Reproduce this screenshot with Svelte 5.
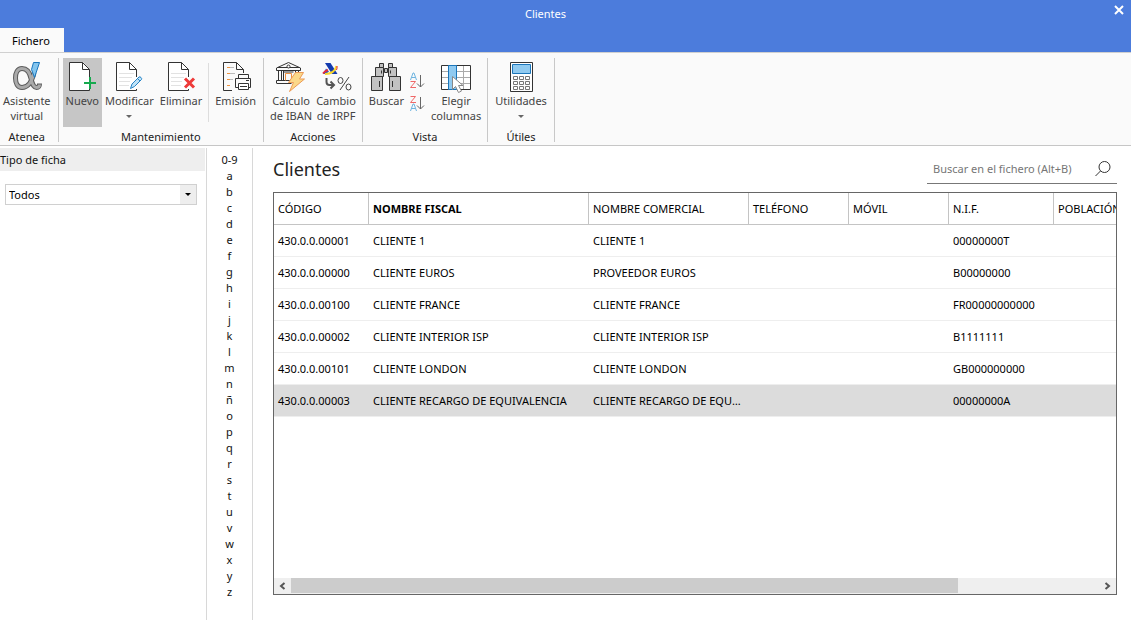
<script lang="ts">
  type Row = {
    codigo: string;
    fiscal: string;
    comercial: string;
    telefono: string;
    movil: string;
    nif: string;
    poblacion: string;
  };

  const columns: { key: keyof Row; label: string }[] = [
    { key: "codigo", label: "CÓDIGO" },
    { key: "fiscal", label: "NOMBRE FISCAL" },
    { key: "comercial", label: "NOMBRE COMERCIAL" },
    { key: "telefono", label: "TELÉFONO" },
    { key: "movil", label: "MÓVIL" },
    { key: "nif", label: "N.I.F." },
    { key: "poblacion", label: "POBLACIÓN" },
  ];

  function row(codigo: string, fiscal: string, comercial: string, nif: string): Row {
    return { codigo, fiscal, comercial, nif, telefono: "", movil: "", poblacion: "" };
  }

  const rows: Row[] = [
    row("430.0.0.00001", "CLIENTE 1", "CLIENTE 1", "00000000T"),
    row("430.0.0.00000", "CLIENTE EUROS", "PROVEEDOR EUROS", "B00000000"),
    row("430.0.0.00100", "CLIENTE FRANCE", "CLIENTE FRANCE", "FR00000000000"),
    row("430.0.0.00002", "CLIENTE INTERIOR ISP", "CLIENTE INTERIOR ISP", "B1111111"),
    row("430.0.0.00101", "CLIENTE LONDON", "CLIENTE LONDON", "GB000000000"),
    row(
      "430.0.0.00003",
      "CLIENTE RECARGO DE EQUIVALENCIA",
      "CLIENTE RECARGO DE EQUIVALENCIA",
      "00000000A",
    ),
  ];

  const letters = ["0-9", ..."abcdefghijklmnñopqrstuvwxyz"];

  let selected = $state("430.0.0.00003");
  let tipo = $state("Todos");
  let search = $state("");
  let scroller: HTMLDivElement;

  function scroll(dx: number) {
    scroller.scrollLeft += dx;
  }
</script>

{#snippet page()}
  <path d="M1.5 1.5h14l6 7v21h-20z" fill="#fff" stroke="none" />
  <path d="M21.5 16V8.5l-7-7h-13v28h20v-1.5" fill="none" stroke="#333" />
  <path d="M14.5 1.5v7h7" fill="none" stroke="#333" />
{/snippet}

{#snippet lines()}
  <path d="M4 12.5h15M4 16.500h13M4 20.500h11M4 24.500h10" stroke="#e2e2e2" />
{/snippet}

<div class="window">
  <header class="titlebar">
    <h1>Clientes</h1>
    <button type="button" class="close" aria-label="Cerrar">
      <svg width="10" height="10" viewBox="0 0 10 10">
        <path d="M1 1l8 8M9 1L1 9" stroke="#fff" stroke-width="2" />
      </svg>
    </button>
  </header>
  <nav class="tabs">
    <button type="button" class="tab">Fichero</button>
  </nav>

  <div class="ribbon">
    <section class="group first">
      <div class="tools">
        <button type="button" class="tool">
          <svg width="32" height="32" viewBox="0 0 32 32" fill="none">
            <path
              d="M23 12C21 20 17 26.500 11 26.500 6.500 26.500 4.500 22 4.500 17S6.500 7.500 11 7.500c6 0 8 5 9 10s3 9 5.500 9c2 0 3-1 3-4"
              stroke="#5c5c5c"
              stroke-width="5"
            />
            <path
              d="M23 12C21 20 17 26.500 11 26.500 6.500 26.500 4.500 22 4.500 17S6.500 7.500 11 7.500c6 0 8 5 9 10s3 9 5.500 9c2 0 3-1 3-3"
              stroke="#aaa"
              stroke-width="3"
            />
            <path d="M22.500 1.500h6l-5 15-3-8z" fill="#83c5ee" stroke="#1976bd" />
          </svg>
          <span>Asistente<br />virtual</span>
        </button>
      </div>
      <h2>Atenea</h2>
    </section>

    <section class="group">
      <div class="tools">
        <button type="button" class="tool active">
          <svg width="32" height="32" viewBox="-2 0 32 32">
            {@render page()}
            <path d="M22 16v12M16 22h12" stroke="#16a94e" stroke-width="2" />
          </svg>
          <span>Nuevo</span>
        </button>
        <button type="button" class="tool">
          <svg width="32" height="32" viewBox="-2 0 32 32">
            {@render page()}
            {@render lines()}
            <path
              d="M15.500 27.500l1.500-4.500 7-7c1-1 3.500 1.500 2.500 2.500l-7 7zM22.500 17.500l2.500 2.500"
              fill="#bfe2f7"
              stroke="#2583c6"
            />
          </svg>
          <span>Modificar</span>
          <i class="caret"></i>
        </button>
        <button type="button" class="tool">
          <svg width="32" height="32" viewBox="-2 0 32 32">
            {@render page()}
            {@render lines()}
            <path d="M18 17.500l9 9M27 17.500l-9 9" stroke="#ee3a39" stroke-width="3" />
          </svg>
          <span>Eliminar</span>
        </button>
        <div class="divider"></div>
        <button type="button" class="tool">
          <svg width="32" height="32" viewBox="0 0 32 32" fill="none" stroke="#333">
            <path d="M12 29.500H3.500v-28h13l7 7V12M16.500 1.500v7h7" />
            <path d="M7 6.500h3M7 12.500h3M7 18.500h3M7 24.500h3" stroke="#ef9440" />
            <path d="M10 6.500h4M10 12.500h5M10 18.500h3" stroke="#bbb" />
            <path d="M18.500 17.500v-4h10v4M18.500 26.500h-3v-9h15v9h-3" fill="#fafafa" />
            <path d="M18.500 22.500h10v6h-10zM20 25.500h7M26 19.500h3" fill="#fff" />
          </svg>
          <span>Emisión</span>
        </button>
      </div>
      <h2>Mantenimiento</h2>
    </section>

    <section class="group tight">
      <div class="tools">
        <button type="button" class="tool">
          <svg width="32" height="32" viewBox="0 0 32 32" fill="none" stroke="#333">
            <path d="M1.500 9.500V7L13.500 1.500 25.500 7v2.500zM3 6.500h21" />
            <circle cx="13.500" cy="5.500" r="1.500" fill="#fff" />
            <path
              d="M3.500 10v9.500h3V10M8.500 10v9.500M20.500 10v5M23.500 10v3M3 19.500h7M1.500 22.500h15M1.500 22v-2.500h16M8.500 11h10"
            />
            <path d="M10.500 19.500v-7h6v5" stroke="#ed9141" />
            <path
              d="M20.500 11.500h8l-4 6.500h5l-15 12.500 4-9h-5z"
              fill="#fbd889"
              stroke="#ed9b56"
            />
          </svg>
          <span>Cálculo<br />de IBAN</span>
        </button>
        <button type="button" class="tool">
          <svg width="32" height="32" viewBox="0 0 32 32" fill="none">
            <path d="M5 2h5.500l7 11H12z" fill="#143bae" />
            <path d="M6 7.500l3 3-3 2.500H3z" fill="#2356c8" />
            <path d="M3 12.500c1.500-2 3-3 5-3.500" stroke="#e92939" stroke-width="2" />
            <path d="M5 13c5 0 10-2 11.500-8" stroke="#f9d729" stroke-width="2" />
            <path d="M16.500 9c.5-1 .8-2.500.5-4" stroke="#e92939" />
            <path
              d="M6.500 17v4c0 2 1 3 3 3h4M10.500 20.500l3.500 3.500-3.500 3.500"
              stroke="#555"
              stroke-width="2"
            />
            <path d="M29 16L20 29" stroke="#444" />
            <ellipse cx="20.500" cy="19.500" rx="2.500" ry="3" stroke="#444" />
            <ellipse cx="28.500" cy="26" rx="2.500" ry="3" stroke="#444" />
          </svg>
          <span>Cambio<br />de IRPF</span>
        </button>
      </div>
      <h2>Acciones</h2>
    </section>

    <section class="group tight">
      <div class="tools">
        <button type="button" class="tool">
          <svg width="32" height="32" viewBox="0 0 32 32" fill="#c2c2c2" stroke="#333">
            <path d="M9.500 2.500h4v4h-4zM18.500 2.500h4v4h-4zM14.500 7.500h3v4h-3z" />
            <path d="M5.500 6.500h8v9h-8zM18.500 6.500h8v9h-8z" />
            <path d="M1.500 15.500h11v14h-11zM19.500 15.500h11v14h-11z" />
            <path d="M9.500 20v6M22.500 20v6M11.500 9.500v3M20.500 9.500v3" />
          </svg>
          <span>Buscar</span>
        </button>
        <div class="sorts">
          <button type="button" aria-label="Orden ascendente">
            <svg width="18" height="18" viewBox="0 0 18 18" fill="none">
              <path d="M2.500 8l2.500-7h1l2.500 7M3.500 5.500h4" stroke="#6eb4e0" />
              <path d="M2.500 9.500h5l-5 6h5.500" stroke="#ef6868" />
              <path d="M12.500 3v12M9 11.500l3.500 3.500 3.500-3.500" stroke="#666" />
            </svg>
          </button>
          <button type="button" aria-label="Orden descendente">
            <svg width="18" height="18" viewBox="0 0 18 18" fill="none">
              <path d="M2.500 1.500h5l-5 6h5.500" stroke="#ef6868" />
              <path d="M2.500 16l2.500-7h1l2.500 7M3.500 13.500h4" stroke="#6eb4e0" />
              <path d="M12.500 2v12M9 10.500l3.500 3.500 3.500-3.500" stroke="#666" />
            </svg>
          </button>
        </div>
        <button type="button" class="tool">
          <svg width="32" height="32" viewBox="0 0 32 32" fill="none">
            <path d="M1.500 4.500h29v24h-29z" fill="#fff" />
            <path d="M1 10.500h30M1 16.500h30M1 22.500h30M16.500 4v25M23.500 4v25" stroke="#aaa" />
            <path d="M1.500 4.500h29v24h-29z" stroke="#333" />
            <path d="M8.500 4.500h8v24h-8z" fill="#90caf0" stroke="#1b76bb" />
            <path d="M12.500 15.500v13l3-3 3 6 3-1.500-3-5.500h4.500z" fill="#fff" stroke="#888" />
          </svg>
          <span>Elegir<br />columnas</span>
        </button>
      </div>
      <h2>Vista</h2>
    </section>

    <section class="group">
      <div class="tools">
        <button type="button" class="tool">
          <svg width="32" height="32" viewBox="0 0 32 32" fill="none" stroke="#333">
            <path d="M5.500 1.500h22v29h-22z" fill="#fff" />
            <path d="M7.500 3.500h18v9h-18z" fill="#90caf0" stroke="#1b76bb" />
            <path
              d="M8.500 15.500h4v3h-4zM14.500 15.500h4v3h-4zM20.500 15.500h4v3h-4zM8.500 20.500h4v3h-4zM14.500 20.500h4v3h-4zM20.500 20.500h4v3h-4zM8.500 25.500h4v3h-4zM14.500 25.500h4v3h-4zM20.500 25.500h4v3h-4z"
              stroke="#777"
            />
          </svg>
          <span>Utilidades</span>
          <i class="caret"></i>
        </button>
      </div>
      <h2>Útiles</h2>
    </section>
  </div>

  <div class="body">
    <aside class="filters">
      <label for="tipo">Tipo de ficha</label>
      <div class="select-wrap">
        <select id="tipo" bind:value={tipo}>
          <option>Todos</option>
        </select>
        <span class="select-arrow"><i class="caret dark"></i></span>
      </div>
    </aside>

    <nav class="letters">
      {#each letters as letter (letter)}
        <button type="button">{letter}</button>
      {/each}
    </nav>

    <main class="content">
      <div class="content-head">
        <h2>Clientes</h2>
        <div class="search">
          <input
            type="text"
            aria-label="Buscar en el fichero"
            placeholder="Buscar en el fichero (Alt+B)"
            bind:value={search}
          />
          <button type="button" aria-label="Buscar">
            <svg width="16" height="16" viewBox="0 0 16 16" fill="none" stroke="#333">
              <circle cx="9.500" cy="6" r="5.500" />
              <path d="M5.500 10L.5 15" />
            </svg>
          </button>
        </div>
      </div>

      <div class="grid">
        <div class="grid-scroll" bind:this={scroller}>
          <table>
            <colgroup>
              {#each columns as col (col.key)}
                <col class={col.key} />
              {/each}
            </colgroup>
            <thead>
              <tr>
                {#each columns as col (col.key)}
                  <th class:sorted={col.key === "fiscal"}>{col.label}</th>
                {/each}
              </tr>
            </thead>
            <tbody>
              {#each rows as item (item.codigo)}
                <tr
                  class:selected={item.codigo === selected}
                  onclick={() => (selected = item.codigo)}
                >
                  {#each columns as col (col.key)}
                    <td>{item[col.key]}</td>
                  {/each}
                </tr>
              {/each}
            </tbody>
          </table>
        </div>
        <div class="scrollbar">
          <button type="button" aria-label="Izquierda" onclick={() => scroll(-40)}>
            <svg width="7" height="8" viewBox="0 0 7 8">
              <path d="M5.500 1L2 4l3.500 3" fill="none" stroke="#555" stroke-width="2" />
            </svg>
          </button>
          <div class="track"><div class="thumb"></div></div>
          <button type="button" aria-label="Derecha" onclick={() => scroll(40)}>
            <svg width="7" height="8" viewBox="0 0 7 8">
              <path d="M1.500 1L5 4 1.500 7" fill="none" stroke="#555" stroke-width="2" />
            </svg>
          </button>
        </div>
      </div>
    </main>
  </div>
</div>

<style>
  :global(body) {
    margin: 0;
    background: #fff;
  }

  .window {
    display: flex;
    flex-direction: column;
    min-height: 100vh;
    font-family: "Noto Sans", "Open Sans", sans-serif;
    font-size: 11px;
    color: #111;
  }

  h1,
  h2 {
    margin: 0;
    font-weight: 400;
  }

  button {
    font: inherit;
    color: inherit;
    background: none;
    border: none;
    padding: 0;
  }

  svg {
    display: block;
  }

  .titlebar {
    display: flex;
    height: 28px;
    background: #4c7cdc;
    color: #fff;
  }

  .titlebar h1 {
    flex: 1;
    font-size: 11px;
    line-height: 28px;
    text-align: center;
  }

  .close {
    display: flex;
    justify-content: flex-end;
    width: 40px;
    padding: 5px 7px;
  }

  .tabs {
    display: flex;
    background: #4c7cdc;
    height: 24px;
  }

  .tab {
    padding: 2px 14px 0 12px;
    background: #fafafa;
    color: #000;
    line-height: 22px;
  }

  .ribbon {
    display: flex;
    padding-top: 5px;
    background: #fafafa;
    border-top: 1px solid #d0d0d0;
    border-bottom: 1px solid #c6c6c6;
  }

  .group {
    display: flex;
    flex-direction: column;
    padding: 0 4px;
    margin-bottom: 3px;
    border-right: 1px solid #c8c8c8;
  }

  .group.first {
    padding-left: 0;
  }

  .group h2 {
    font-size: 11px;
    line-height: 11px;
    text-align: center;
    color: #222;
  }

  .tools {
    display: flex;
    align-items: stretch;
    height: 69px;
    margin-bottom: 4px;
  }

  .tool {
    display: flex;
    flex-direction: column;
    align-items: center;
    padding: 3px 3px 0;
    line-height: 15px;
    color: #444;
    text-align: center;
  }

  .tight .tool {
    padding: 3px 2px 0;
  }

  .tool.active {
    background: #c6c6c6;
  }

  .caret {
    margin-top: 7px;
    border: 3px solid transparent;
    border-top-color: #666;
    border-bottom: none;
  }

  .caret.dark {
    margin: 0;
    border-top-color: #000;
  }

  .divider {
    width: 1px;
    margin: 5px 3px;
    background: #ddd;
  }

  .sorts {
    display: flex;
    flex-direction: column;
    gap: 5px;
    padding: 14px 3px 0 2px;
  }

  .body {
    display: flex;
    flex: 1;
    padding-top: 2px;
  }

  .filters {
    flex: 0 0 206px;
    border-right: 1px solid #d8d8d8;
  }

  .filters label {
    display: block;
    background: #eee;
    line-height: 23px;
    margin-right: 1px;
  }

  .select-wrap {
    display: flex;
    margin: 13px 9px 0 5px;
    border: 1px solid #d0d0d0;
    position: relative;
  }

  select {
    flex: 1;
    height: 19px;
    padding: 0 20px 0 3px;
    border: none;
    border-radius: 0;
    appearance: none;
    background: #fff;
    font: inherit;
    color: #000;
  }

  .select-arrow {
    position: absolute;
    top: 0;
    right: 0;
    bottom: 0;
    width: 16px;
    display: flex;
    align-items: center;
    justify-content: center;
    background: #eee;
    pointer-events: none;
  }

  .letters {
    flex: 0 0 45px;
    display: flex;
    flex-direction: column;
    padding-top: 4px;
    border-right: 1px solid #d8d8d8;
  }

  .letters button {
    height: 16px;
    line-height: 16px;
    text-align: center;
  }

  .content {
    flex: 1;
    min-width: 0;
    display: flex;
    flex-direction: column;
    padding: 0 14px 25px 20px;
  }

  .content-head {
    display: flex;
    justify-content: space-between;
    height: 44px;
  }

  .content-head h2 {
    font-size: 18px;
    line-height: 42px;
    color: #222;
  }

  .search {
    display: flex;
    align-items: center;
    width: 190px;
    height: 29px;
    margin-top: 6px;
    border-bottom: 1px solid #777;
  }

  .search input {
    flex: 1;
    min-width: 0;
    padding: 0 6px;
    border: none;
    outline: none;
    background: none;
    font: inherit;
  }

  .search input::placeholder {
    color: #767676;
    opacity: 1;
  }

  .search button {
    padding-right: 6px;
  }

  .grid {
    flex: 1;
    display: flex;
    flex-direction: column;
    border: 1px solid #666;
  }

  .grid-scroll {
    flex: 1;
    overflow: hidden;
  }

  table {
    width: 1020px;
    table-layout: fixed;
    border-collapse: separate;
    border-spacing: 0;
    color: #000;
  }

  col.codigo {
    width: 95px;
  }

  col.fiscal {
    width: 220px;
  }

  col.comercial {
    width: 160px;
  }

  col.telefono,
  col.movil {
    width: 100px;
  }

  col.nif {
    width: 105px;
  }

  th,
  td {
    height: 31px;
    padding: 0 8px 0 4px;
    text-align: left;
    font-weight: 400;
    white-space: nowrap;
    overflow: hidden;
    text-overflow: ellipsis;
    border-bottom: 1px solid #eee;
  }

  th {
    border-right: 1px solid #c4c4c4;
    border-bottom-color: #c4c4c4;
  }

  th.sorted {
    font-weight: 700;
  }

  tr.selected td {
    background: #dcdcdc;
  }

  .scrollbar {
    display: flex;
    height: 16px;
    background: #efefef;
  }

  .scrollbar button {
    display: flex;
    align-items: center;
    justify-content: center;
    width: 17px;
  }

  .track {
    flex: 1;
  }

  .thumb {
    width: 82.5%;
    height: 15px;
    background: #ccc;
  }
</style>
